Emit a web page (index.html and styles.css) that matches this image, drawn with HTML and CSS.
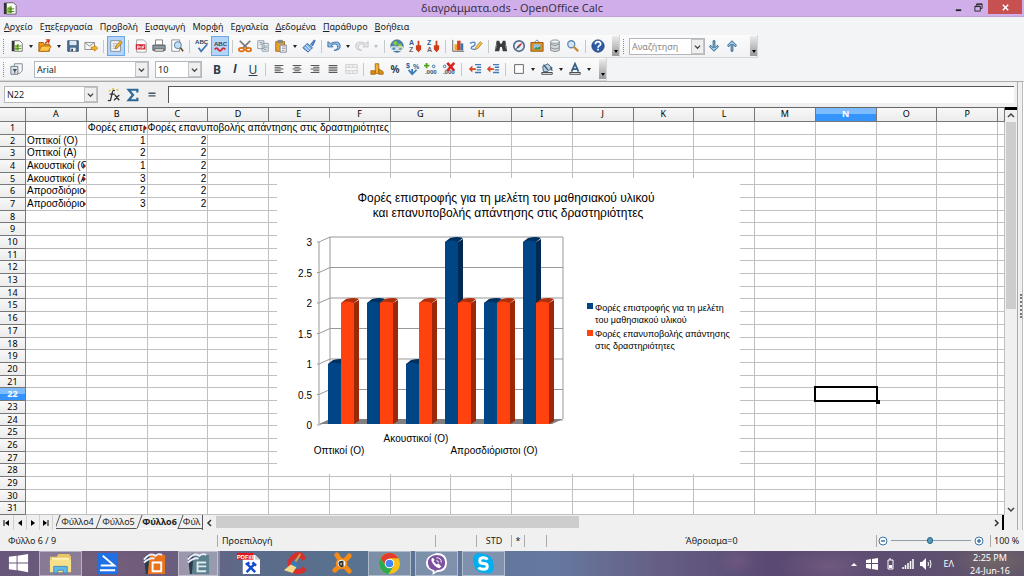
FILE: index.html
```html
<!DOCTYPE html>
<html lang="el">
<head>
    <meta charset="UTF-8">
    <meta name="viewport" content="width=device-width, initial-scale=1.0">
    <title>διαγράμματα.ods - OpenOffice Calc</title>
    <link rel="stylesheet" href="styles.css">
</head>
<body>

    <header class="titlebar">
        <svg class="icon app-icon" viewBox="0 0 16 16"><path d="M1 2h3v13H1z" fill="#333"/><path d="M4 2h8l3 3v10H4z" fill="#fff" stroke="#555"/><path d="M4 8l6-3v9H5z" fill="#8dc63f"/><path d="M6 9h7M6 12h7M9 7v7" stroke="#3f7a1c"/></svg>
        <h1>διαγράμματα.ods - OpenOffice Calc</h1>
        <div class="window-buttons">
            <button aria-label="Ελαχιστοποίηση"><svg viewBox="0 0 10 10"><path d="M2 8h6" stroke="#222" stroke-width="2"/></svg></button>
            <button aria-label="Επαναφορά"><svg viewBox="0 0 10 10"><path d="M3 3V1h6v5H7M1 3.500h6V9H1z" fill="none" stroke="#222"/><path d="M1 4h6M3 1.500h6" stroke="#222"/></svg></button>
            <button class="close" aria-label="Κλείσιμο"><svg viewBox="0 0 10 10"><path d="M2 2l6 6M8 2L2 8" stroke="#fff" stroke-width="1.600"/></svg></button>
        </div>
    </header>

    <nav class="menubar">
        <button><u>Α</u>ρχείο</button>
        <button>Ε<u>π</u>εξεργασία</button>
        <button>Πρ<u>ο</u>βολή</button>
        <button><u>Ε</u>ισαγωγή</button>
        <button>Μορ<u>φ</u>ή</button>
        <button>Ε<u>ρ</u>γαλεία</button>
        <button><u>Δ</u>εδομένα</button>
        <button><u>Π</u>αράθυρο</button>
        <button><u>Β</u>οήθεια</button>
    </nav>

    <div class="toolbar-row">
        <div class="toolbar">
            <span class="grip"></span>
            <button class="tool" aria-label="Νέο"><svg class="icon" viewBox="0 0 16 16"><path d="M2 2h3v12H2z" fill="#333"/><path d="M5 2h6l3 3v9H5z" fill="#fff" stroke="#666"/><path d="M5 8l5-3v8H6z" fill="#a5cf4c"/><path d="M6 8h7M6 11h7M9 6v7" stroke="#45812c"/></svg></button>
            <button class="drop" aria-label="Περισσότερα"></button>
            <button class="tool" aria-label="Άνοιγμα"><svg class="icon" viewBox="0 0 16 16"><path d="M1 4h5l1 2h6v8H1z" fill="#e99a1c" stroke="#a55c06"/><path d="M1 14l3-6h11l-3 6z" fill="#ffc74a" stroke="#b06a0a"/><path d="M8 5l4-3M9 1l4 0-1 4" stroke="#d33b17" stroke-width="1.500" fill="none"/></svg></button>
            <button class="drop" aria-label="Περισσότερα"></button>
            <button class="tool" aria-label="Αποθήκευση"><svg class="icon" viewBox="0 0 16 16"><path d="M2 2h12v12H2z" fill="#4d7192" stroke="#2d4a66"/><path d="M4 2h8v5H4z" fill="#dfe9f2"/><path d="M5 10h6v4H5z" fill="#f5f5f5"/><path d="M6 11h2v3H6z" fill="#345"/></svg></button>
            <button class="tool" aria-label="Αποστολή"><svg class="icon" viewBox="0 0 16 16"><path d="M1 4h11v8H1z" fill="#f6f6f6" stroke="#888"/><path d="M1 4l5 4 6-4" fill="none" stroke="#888"/><path d="M8 9h4V7l4 3.500-4 3.500v-2H8z" fill="#f7b32d" stroke="#b97508" stroke-width=".7"/></svg></button>
            <span class="sep"></span>
            <button class="tool pressed" aria-label="Επεξεργασία αρχείου" aria-pressed="true"><svg class="icon" viewBox="0 0 16 16"><path d="M2 2h11v12H2z" fill="#fff" stroke="#79838d"/><path d="M4 5h6M4 7h6M4 9h4M4 11h6" stroke="#aab"/><path d="M7 11l1-3 5-6 2 2-5 6z" fill="#f5b52b" stroke="#865c0c" stroke-width=".7"/></svg></button>
            <span class="sep"></span>
            <button class="tool" aria-label="PDF"><svg class="icon" viewBox="0 0 16 16"><path d="M3 1h8l3 3v11H3z" fill="#fff" stroke="#999"/><path d="M2 6h11v6H2z" fill="#d21f2c"/><path d="M4 11V8h2v2H4M8 8v3M10 11V8h2M10 9.500h1.500" stroke="#fff" fill="none"/></svg></button>
            <button class="tool" aria-label="Εκτύπωση"><svg class="icon" viewBox="0 0 16 16"><path d="M4 1h8v6H4z" fill="#fff" stroke="#777"/><path d="M1 7h14v6H1z" fill="#8d97a0" stroke="#4c5358"/><path d="M3 11h10v3H3z" fill="#dedede" stroke="#666"/></svg></button>
            <button class="tool" aria-label="Προεπισκόπηση"><svg class="icon" viewBox="0 0 16 16"><path d="M2 1h9v13H2z" fill="#fff" stroke="#888"/><circle cx="9" cy="7" r="4" fill="#bfe0f7" stroke="#4a7398"/><path d="M12 10l3 4" stroke="#6b4e2a" stroke-width="2"/></svg></button>
            <span class="sep"></span>
            <button class="tool" aria-label="Ορθογραφία"><svg class="icon" viewBox="0 0 16 16"><text class="abc" x="0" y="6">ABC</text><path d="M4 10l3 4 7-8" fill="none" stroke="#3b78b5" stroke-width="2"/></svg></button>
            <button class="tool pressed" aria-label="Αυτόματος έλεγχος" aria-pressed="true"><svg class="icon" viewBox="0 0 16 16"><text class="abc" x="1" y="8">ABC</text><path d="M2 12q2-3 4 0t4 0 4 0" fill="none" stroke="#d8232a" stroke-width="2"/></svg></button>
            <span class="sep"></span>
            <button class="tool" aria-label="Αποκοπή"><svg class="icon" viewBox="0 0 16 16"><path d="M2 2l9 9M14 2l-9 9" stroke="#777" stroke-width="2"/><ellipse cx="4" cy="12" rx="3" ry="2" fill="none" stroke="#e0700f" stroke-width="2"/><ellipse cx="12" cy="12" rx="3" ry="2" fill="none" stroke="#e0700f" stroke-width="2"/></svg></button>
            <button class="tool" aria-label="Αντιγραφή"><svg class="icon" viewBox="0 0 16 16"><path d="M2 2h7v9H2zM7 5h7v9H7z" fill="#eef2f6" stroke="#8896a2"/><path d="M4 4h3M4 6h3M9 8h4M9 10h4M9 12h3" stroke="#8896a2"/></svg></button>
            <button class="tool" aria-label="Επικόλληση"><svg class="icon" viewBox="0 0 16 16"><path d="M2 3h10v11H2z" fill="#e8a52b" stroke="#9a6610"/><path d="M4 1h6v4H4z" fill="#888"/><path d="M7 7h7v8H7z" fill="#fff" stroke="#778"/><path d="M9 9h4M9 11h4M9 13h3" stroke="#8896a2"/></svg></button>
            <button class="drop" aria-label="Περισσότερα"></button>
            <button class="tool" aria-label="Πινέλο μορφοποίησης"><svg class="icon" viewBox="0 0 16 16"><path d="M10 6l4-5 1 1-3 6z" fill="#5a8fd0" stroke="#2b5ea3"/><path d="M6 5l6 5-5 5-6-5z" fill="#72a9e6" stroke="#2b5ea3"/><path d="M3 9l5 5M5 7l5 5" stroke="#fff"/></svg></button>
            <span class="sep"></span>
            <button class="tool" aria-label="Αναίρεση"><svg class="icon" viewBox="0 0 16 16"><path d="M1 3v6h6L5 7q6-3 7 1t-4 5q8 0 7-6T4 5z" fill="#8fbce5" stroke="#3a6ea5"/></svg></button>
            <button class="drop" aria-label="Περισσότερα"></button>
            <button class="tool" aria-label="Επανάληψη" disabled><svg class="icon" viewBox="0 0 16 16"><path d="M15 3v6H9l2-2Q5 4 4 8t4 5q-8 0-7-6t11-2z" fill="#e6e6e6" stroke="#c2c2c2"/></svg></button>
            <button class="drop" aria-label="Περισσότερα" disabled></button>
            <span class="sep"></span>
            <button class="tool" aria-label="Υπερσύνδεσμος"><svg class="icon" viewBox="0 0 16 16"><circle cx="8" cy="8" r="7" fill="#4587ba" stroke="#315d7d"/><path d="M3 4l4-2 2 3-3 3zM9 6l4-1 1 5-4 2z" fill="#8cc63c"/><path d="M2 9h5v4H2zM9 9h5v4H9zM6 11h4" fill="none" stroke="#e8e8e8" stroke-width="1.500"/></svg></button>
            <button class="tool" aria-label="Αύξουσα ταξινόμηση"><svg class="icon" viewBox="0 0 16 16"><text class="sort-letter" x="1" y="7">A</text><text class="sort-letter grey" x="1" y="15">Z</text><path d="M11 2h2v5h2v5l-3 3-3-3V7h2z" fill="#cf3d1c"/></svg></button>
            <button class="tool" aria-label="Φθίνουσα ταξινόμηση"><svg class="icon" viewBox="0 0 16 16"><text class="sort-letter" x="1" y="7">Z</text><text class="sort-letter grey" x="1" y="15">A</text><path d="M11 2h2v5h2v5l-3 3-3-3V7h2z" fill="#cf3d1c"/></svg></button>
            <span class="sep"></span>
            <button class="tool" aria-label="Γράφημα"><svg class="icon" viewBox="0 0 16 16"><path d="M2 1v13h13" fill="none" stroke="#555"/><path d="M4 6h3v7H4z" fill="#f3a22b"/><path d="M7 2h4v11H7z" fill="#d2421c"/><path d="M11 5h3v8h-3z" fill="#3c75b3"/></svg></button>
            <button class="tool" aria-label="Σχεδίαση"><svg class="icon" viewBox="0 0 16 16"><path d="M1 5q6-3 6 0t-4 4q-2 3 4 3" fill="none" stroke="#4f87c5" stroke-width="1.500"/><path d="M7 12l1-3 5-6 2 2-5 6z" fill="#f8c04e" stroke="#94630c" stroke-width=".7"/></svg></button>
            <span class="sep"></span>
            <button class="tool" aria-label="Εύρεση"><svg class="icon" viewBox="0 0 16 16"><path d="M3 2h3l1 3h2l1-3h3l2 12h-5l-1-5H7l-1 5H1z" fill="#3a3d40"/><path d="M3 6l-1 5M13 6l1 5" stroke="#90959a"/></svg></button>
            <button class="tool" aria-label="Πλοηγός"><svg class="icon" viewBox="0 0 16 16"><circle cx="8" cy="8" r="6" fill="#e9f2fa" stroke="#5c7090" stroke-width="2"/><path d="M12 4l-3 5-2-2z" fill="#d22"/><path d="M4 12l3-5 2 2z" fill="#456"/></svg></button>
            <button class="tool" aria-label="Συλλογή"><svg class="icon" viewBox="0 0 16 16"><path d="M5 4l3-3 3 3" fill="none" stroke="#777"/><path d="M1 4h14v10H1z" fill="#e28a1b" stroke="#975609"/><path d="M4 6h8v6H4z" fill="#8ec3e8"/><path d="M4 12l3-3 2 1 3-2v4z" fill="#4c9340"/></svg></button>
            <button class="tool" aria-label="Προελεύσεις δεδομένων"><svg class="icon" viewBox="0 0 16 16"><path d="M3 3v10q5 3 10 0V3z" fill="#d5d9dc" stroke="#848b91"/><ellipse cx="8" cy="3" rx="5" ry="2" fill="#f4f4f4" stroke="#848b91"/><path d="M3 6q5 3 10 0M3 10q5 3 10 0" fill="none" stroke="#848b91"/></svg></button>
            <button class="tool" aria-label="Εστίαση"><svg class="icon" viewBox="0 0 16 16"><circle cx="6" cy="6" r="4" fill="#cfe7f8" stroke="#6489a8" stroke-width="1.500"/><path d="M9 9l5 5" stroke="#c98b2d" stroke-width="2.500"/></svg></button>
            <span class="sep"></span>
            <button class="tool" aria-label="Βοήθεια"><svg class="icon" viewBox="0 0 16 16"><circle cx="8" cy="8" r="7" fill="#2c5da8" stroke="#1b3a76"/><path d="M5 6q0-3 3-3t3 3q0 1-2 2-1 1-1 2M8 11v2" fill="none" stroke="#fff" stroke-width="2"/></svg></button>
            <button class="overflow" aria-label="Περισσότερα κουμπιά"></button>
        </div>
        <div class="toolbar">
            <span class="grip"></span>
            <div class="combo search-box">
                <input type="text" placeholder="Αναζήτηση" aria-label="Αναζήτηση">
                <button class="combo-arrow" aria-label="Ιστορικό"><svg viewBox="0 0 8 8"><path d="M1 3l3 3 3-3" fill="none" stroke="#444" stroke-width="1.500"/></svg></button>
            </div>
            <button class="tool" aria-label="Επόμενο"><svg class="icon" viewBox="0 0 16 16"><path d="M7 2h2v8l3-3 1 2-5 5-5-5 1-2 3 3z" fill="#9cc8ea" stroke="#25597f"/></svg></button>
            <button class="tool" aria-label="Προηγούμενο"><svg class="icon" viewBox="0 0 16 16"><path d="M7 14h2V6l3 3 1-2-5-5-5 5 1 2 3-3z" fill="#9cc8ea" stroke="#25597f"/></svg></button>
            <button class="overflow last" aria-label="Περισσότερα κουμπιά"></button>
        </div>
    </div>

    <div class="toolbar-row formatting">
        <div class="toolbar">
            <span class="grip"></span>
            <button class="tool" aria-label="Στυλ"><svg class="icon" viewBox="0 0 16 16"><path d="M5 2h9v8l-3 3H5z" fill="#f5f7f9" stroke="#76828c"/><path d="M1 5h8v9H1z" fill="#dce3e9" stroke="#65717b"/><path d="M3 8h5l-2 3v2H5v-2z" fill="#46525c"/></svg></button>
            <div class="combo font-name">
                <select aria-label="Γραμματοσειρά"><option>Arial</option></select>
                <span class="combo-arrow"><svg viewBox="0 0 8 8"><path d="M1 3l3 3 3-3" fill="none" stroke="#444" stroke-width="1.500"/></svg></span>
            </div>
            <div class="combo font-size">
                <select aria-label="Μέγεθος"><option>10</option></select>
                <span class="combo-arrow"><svg viewBox="0 0 8 8"><path d="M1 3l3 3 3-3" fill="none" stroke="#444" stroke-width="1.500"/></svg></span>
            </div>
            <button class="tool letter"><b>B</b></button>
            <button class="tool letter"><i>I</i></button>
            <button class="tool letter"><u>U</u></button>
            <span class="sep"></span>
            <button class="tool" aria-label="Στοίχιση αριστερά"><svg class="icon" viewBox="0 0 16 16"><path d="M3 4h10M3 6h7M3 8h10M3 10h7M3 12h10" stroke="#444"/></svg></button>
            <button class="tool" aria-label="Κεντράρισμα"><svg class="icon" viewBox="0 0 16 16"><path d="M3 4h10M5 6h6M3 8h10M5 10h6M3 12h10" stroke="#444"/></svg></button>
            <button class="tool" aria-label="Στοίχιση δεξιά"><svg class="icon" viewBox="0 0 16 16"><path d="M3 4h10M6 6h7M3 8h10M6 10h7M3 12h10" stroke="#444"/></svg></button>
            <button class="tool" aria-label="Πλήρης στοίχιση"><svg class="icon" viewBox="0 0 16 16"><path d="M3 4h10M3 6h10M3 8h10M3 10h10M3 12h10" stroke="#444"/></svg></button>
            <button class="tool" aria-label="Συγχώνευση κελιών" disabled><svg class="icon" viewBox="0 0 16 16"><path d="M2 3h13v10H2zM2 6h13M2 10h13M6 3v3M10 3v3M6 10v3M10 10v3" fill="none" stroke="#ccc"/></svg></button>
            <span class="sep"></span>
            <button class="tool" aria-label="Νόμισμα"><svg class="icon" viewBox="0 0 16 16"><path d="M6 2h4v11H6z" fill="#f3b335" stroke="#a8690b"/><path d="M1 10h5v4H1zM10 8l5 3v3h-5z" fill="#dc8d18" stroke="#a8690b"/></svg></button>
            <button class="tool letter percent">%</button>
            <button class="tool" aria-label="Τυπική μορφή"><svg class="icon" viewBox="0 0 16 16"><text class="sort-letter" x="0" y="7">$</text><text class="sort-letter" x="8" y="8">%</text><path d="M3 9l4 5 5-5M7 8v5" fill="none" stroke="#387bb7" stroke-width="2"/></svg></button>
            <button class="tool" aria-label="Προσθήκη δεκαδικού"><svg class="icon" viewBox="0 0 16 16"><path d="M3 1v6M0 4h6" stroke="#53a21e" stroke-width="2"/><circle cx="11" cy="5" r="1.500" fill="none" stroke="#2d69a4"/><text class="decimals" x="1" y="14">.000</text></svg></button>
            <button class="tool" aria-label="Διαγραφή δεκαδικού"><svg class="icon" viewBox="0 0 16 16"><circle cx="3" cy="5" r="1.500" fill="none" stroke="#2d69a4"/><text class="decimals" x="1" y="14">.000</text><path d="M6 1l8 9M14 1l-8 9" stroke="#d52420" stroke-width="3"/></svg></button>
            <span class="sep"></span>
            <button class="tool" aria-label="Μείωση εσοχής"><svg class="icon" viewBox="0 0 16 16"><path d="M8 3h7M10 6h5M10 9h5M8 12h7" stroke="#3e7ab8" stroke-width="1.500"/><path d="M1 8l4-4v3h4v2H5v3z" fill="#d9441e"/></svg></button>
            <button class="tool" aria-label="Αύξηση εσοχής"><svg class="icon" viewBox="0 0 16 16"><path d="M8 3h7M10 6h5M10 9h5M8 12h7" stroke="#3e7ab8" stroke-width="1.500"/><path d="M1 8l4-4v3h4v2H5v3z" fill="#d9441e"/></svg></button>
            <span class="sep"></span>
            <button class="tool" aria-label="Περιγράμματα"><svg class="icon" viewBox="0 0 16 16"><path d="M3 3h10v10H3z" fill="#fff" stroke="#555"/></svg></button>
            <button class="drop" aria-label="Περισσότερα"></button>
            <button class="tool" aria-label="Χρώμα φόντου"><svg class="icon" viewBox="0 0 16 16"><path d="M3 5l6-3 5 5-6 4H4z" fill="#b9cfe1" stroke="#395873"/><path d="M4 3l5 6M12 6l2 4" stroke="#395873" stroke-width="1.500"/><path d="M2 12h12v2H2z" fill="#fff" stroke="#333"/></svg></button>
            <button class="drop" aria-label="Περισσότερα"></button>
            <button class="tool" aria-label="Χρώμα γραμματοσειράς"><svg class="icon" viewBox="0 0 16 16"><path d="M4 11l4-9 4 9M5 8h6" fill="none" stroke="#355f88" stroke-width="2"/><path d="M2 12h12v2H2z" fill="#fff" stroke="#333"/></svg></button>
            <button class="drop" aria-label="Περισσότερα"></button>
            <button class="overflow" aria-label="Περισσότερα κουμπιά"></button>
        </div>
    </div>

    <main class="document">
        <div class="workspace">
            <div class="formula-bar">
                <div class="combo name-box">
                    <input type="text" value="N22" aria-label="Πλαίσιο ονόματος">
                    <button class="combo-arrow" aria-label="Περιοχές"><svg viewBox="0 0 8 8"><path d="M1 3l3 3 3-3" fill="none" stroke="#444" stroke-width="1.500"/></svg></button>
                </div>
                <button class="tool function" aria-label="Οδηγός συναρτήσεων"><svg class="icon" viewBox="0 0 16 16"><path d="M2 3h2M6 1h2M11 2h2" stroke="#efc22b" stroke-width="2"/><path d="M9 3q-3-1-3 3L4 14q-1 1-3 0M3 7h6M9 8l5 6M14 8l-6 6" fill="none" stroke="#333" stroke-width="1.500"/></svg></button>
                <button class="tool" aria-label="Άθροισμα"><svg class="icon" viewBox="0 0 16 16"><path d="M13 5V2H3l5 6-5 6h10v-3" fill="none" stroke="#2c6898" stroke-width="2.500"/></svg></button>
                <button class="tool" aria-label="Συνάρτηση"><svg class="icon" viewBox="0 0 16 16"><path d="M4 6h8M4 9h8" stroke="#3f5668" stroke-width="1.500"/></svg></button>
                <input class="formula-input" type="text" aria-label="Γραμμή τύπων">
            </div>

            <div class="sheet-area">
                <div class="sheet">
                    <table id="grid"></table>
                    <svg class="chart" viewBox="0 0 463 296" role="img" aria-label="Γράφημα">
                        <text class="chart-title" x="229" y="24">Φορές επιστροφής για τη μελέτη του μαθησιακού υλικού</text>
                        <text class="chart-title" x="231" y="39">και επανυποβολής απάντησης στις δραστηριότητες</text>
                        <g id="axis"></g>
                        <path d="M42 246h233l11-5H53z" fill="#808080"/>
                        <g id="bars"></g>
                        <text class="category" x="62" y="276">Οπτικοί (Ο)</text>
                        <text class="category" x="139" y="264">Ακουστικοί (Ο)</text>
                        <text class="category" x="217" y="276">Απροσδιόριστοι (Ο)</text>
                        <rect x="310" y="125" width="6" height="6" fill="#004586"/>
                        <text class="legend" x="318" y="133">Φορές επιστροφής για τη μελέτη</text>
                        <text class="legend" x="318" y="145">του μαθησιακού υλικού</text>
                        <rect x="310" y="152" width="6" height="6" fill="#ff420e"/>
                        <text class="legend" x="318" y="159">Φορές επανυποβολής απάντησης</text>
                        <text class="legend" x="318" y="171">στις δραστηριότητες</text>
                    </svg>
                </div>
                <div class="vscroll">
                    <span class="split-handle"></span>
                    <button aria-label="Πάνω"><svg viewBox="0 0 8 8"><path d="M1 5l3-3 3 3" fill="none" stroke="#444" stroke-width="1.500"/></svg></button>
                    <div class="vtrack"><div class="vthumb"></div></div>
                    <button aria-label="Κάτω"><svg viewBox="0 0 8 8"><path d="M1 3l3 3 3-3" fill="none" stroke="#444" stroke-width="1.500"/></svg></button>
                </div>
            </div>

            <div class="tabs-bar">
                <div class="tab-nav">
                    <button aria-label="Πρώτο φύλλο"><svg viewBox="0 0 8 8"><path d="M1 1v6" stroke="#000"/><path d="M6 1v6L2 4z"/></svg></button>
                    <button aria-label="Προηγούμενο φύλλο"><svg viewBox="0 0 8 8"><path d="M6 1v6L2 4z"/></svg></button>
                    <button aria-label="Επόμενο φύλλο"><svg viewBox="0 0 8 8"><path d="M2 1v6l4-3z"/></svg></button>
                    <button aria-label="Τελευταίο φύλλο"><svg viewBox="0 0 8 8"><path d="M1 1v6l4-3z"/><path d="M6 1v6" stroke="#000"/></svg></button>
                </div>
                <div class="tabs">
                    <button>Φύλλο4</button>
                    <button>Φύλλο5</button>
                    <button class="active">Φύλλο6</button>
                    <button class="cut">Φύλ</button>
                </div>
                <div class="hscroll">
                    <button aria-label="Αριστερά"><svg viewBox="0 0 8 8"><path d="M5 1L2 4l3 3" fill="none" stroke="#333" stroke-width="1.500"/></svg></button>
                    <div class="htrack"><div class="hthumb"></div></div>
                    <button aria-label="Δεξιά"><svg viewBox="0 0 8 8"><path d="M3 1l3 3-3 3" fill="none" stroke="#333" stroke-width="1.500"/></svg></button>
                </div>
            </div>
        </div>
        <div class="side-strip"><span></span></div>
    </main>

    <footer class="statusbar">
        <span class="st-sheet">Φύλλο 6 / 9</span>
        <span class="st-style">Προεπιλογή</span>
        <span class="st-insert"></span>
        <span class="st-mode">STD</span>
        <span class="st-mod">*</span>
        <span class="st-sign"></span>
        <span class="st-sum">Άθροισμα=0</span>
        <span class="st-zoom">
            <button aria-label="Σμίκρυνση"><svg viewBox="0 0 10 10"><circle cx="5" cy="5" r="4" fill="#fff" stroke="#3a75a8"/><path d="M3 5h4" stroke="#3a75a8" stroke-width="1.500"/></svg></button>
            <input type="range" min="0" max="100" value="49" aria-label="Ζουμ">
            <button aria-label="Μεγέθυνση"><svg viewBox="0 0 10 10"><circle cx="5" cy="5" r="4" fill="#fff" stroke="#3a75a8"/><path d="M3 5h4M5 3v4" stroke="#3a75a8" stroke-width="1.500"/></svg></button>
        </span>
        <span class="st-percent">100 %</span>
    </footer>

    <div class="taskbar">
        <button class="start" aria-label="Έναρξη"><svg viewBox="0 0 24 24"><path d="M2 5l8-1v7H2zM11 4l11-2v9H11zM2 12h8v7l-8-1zM11 12h11v9l-11-2z" fill="#fff"/></svg></button>
        <button class="open" aria-label="Εξερεύνηση"><svg viewBox="0 0 24 24"><path d="M1 5h7l2-3h11l2 3v16H1z" fill="#e7c767"/><path d="M3 6h18v3H3z" fill="#fff4b8"/><path d="M1 8h22v13H1z" fill="#f7e08c"/><path d="M5 22v-7h14v7h-4v-3H9v3z" fill="#62b8e6" stroke="#3f8dbb"/></svg></button>
        <button aria-label="Εφαρμογή"><svg viewBox="0 0 24 24"><path d="M1 1h22v22H1z" fill="#1f6fe5"/><path d="M7 4l12 10H5M4 19h16" fill="none" stroke="#fff" stroke-width="2"/></svg></button>
        <button aria-label="OpenOffice"><svg viewBox="0 0 24 24"><path d="M1 5L7 1v22H3z" fill="#293d49"/><path d="M7 3h16v20H5z" fill="#e8731d"/><path d="M10 11h9v9h-9z" fill="none" stroke="#fff" stroke-width="2"/><path d="M1 8q6-8 12-4 3-3 7-1M1 11q7-6 11-4" fill="none" stroke="#eef" stroke-width="2"/></svg></button>
        <button class="open current" aria-label="OpenOffice Calc"><svg viewBox="0 0 24 24"><path d="M1 5L7 1v22H3z" fill="#293d49"/><path d="M7 3h16v20H5z" fill="#5c7f8d"/><path d="M11 11h9M11 15h9M11 20h9M11 10v11" stroke="#dce9ee" stroke-width="2"/><path d="M1 8q6-8 12-4 3-3 7-1M1 11q7-6 11-4" fill="none" stroke="#eef" stroke-width="2"/></svg></button>
        <button class="pdf-app" aria-label="PDFill"><svg viewBox="0 0 24 24"><path d="M6 3h13l5 5v15H6z" fill="#fff"/><path d="M19 3v5h5" fill="#ccc"/><path d="M0 1h17v7H0z" fill="#e3141f"/><text class="pdf-label" x="0" y="7">PDFill</text><path d="M10 21l8-8M11 13l8 8M9 13l4-2M16 11l4 3" stroke="#144bd3" stroke-width="2.500"/></svg></button>
        <button aria-label="CCleaner"><svg viewBox="0 0 24 24"><path d="M21 8Q17-1 10 5T9 19q7 4 13-2" fill="none" stroke="#d6302c" stroke-width="5"/><path d="M17 2l-5 8" stroke="#d7a04d" stroke-width="2"/><path d="M9 9l7 4-3 3-6-3z" fill="#367bc0"/><path d="M7 13l6 3-4 6-9-3z" fill="#f4d88c"/></svg></button>
        <button aria-label="Avast"><svg viewBox="0 0 24 24"><path d="M12 12L6 3M12 12l7-8M12 12l-8 7M12 12l7 8" stroke="#f58b15" stroke-width="5" stroke-linecap="round"/><circle cx="11" cy="12" r="6" fill="#f58b15"/><circle cx="11" cy="12" r="4" fill="#fff"/><path d="M13 14q-3 2-4-1t3-3v4" fill="none" stroke="#333" stroke-width="2"/></svg></button>
        <button class="open" aria-label="Chrome"><svg viewBox="0 0 24 24"><circle cx="12" cy="12" r="11" fill="#fbc116"/><path d="M2.500 6.500A11 11 0 0 1 21.500 6.500H12L8 14z" fill="#e33b2e"/><path d="M2.500 6.500A11 11 0 0 0 11 23l5-8-8-1z" fill="#2da94f"/><circle cx="12" cy="12" r="5" fill="#fff"/><circle cx="12" cy="12" r="4" fill="#4285f4"/></svg></button>
        <button class="open" aria-label="Viber"><svg viewBox="0 0 24 24"><path d="M12 1q11 0 11 10t-11 10l-4 3v-4Q1 18 1 11T12 1z" fill="#fff"/><path d="M12 3q9 0 9 8t-9 8l-2 2v-2q-7-1-7-8t9-8z" fill="#7d519f"/><path d="M8 6q-2 1-1 4 3 6 8 7l2-2-3-3-2 1-3-3 1-2z" fill="#fff"/><path d="M12 6q5 0 5 5M12 9q2 0 2 2" fill="none" stroke="#fff"/></svg></button>
        <button class="open" aria-label="Skype"><svg viewBox="0 0 24 24"><path d="M7 1q3 0 5 1 10 1 10 10 1 3 1 5-2 7-9 5Q3 22 2 13-1 2 7 1z" fill="#00aff0"/><path d="M16 8q-1-2-4-2-4 0-4 3t4 3q4 0 4 3t-4 3q-4 0-5-2" fill="none" stroke="#fff" stroke-width="3"/></svg></button>
        <div class="tray">
            <svg class="tray-up" viewBox="0 0 8 8"><path d="M1 6l3-3 3 3z" fill="#fff"/></svg>
            <svg viewBox="0 0 12 12"><path d="M0 2l5-1v4H0zM6 1l6-1v5H6zM0 6h5v5l-5-1zM6 6h6v6l-6-1z" fill="#fff"/></svg>
            <svg viewBox="0 0 12 12"><path d="M5 1h2M4 2h5v9H4z" fill="none" stroke="#fff"/><path d="M5 7h3v3H5z" fill="#fff"/></svg>
            <svg viewBox="0 0 12 12"><path d="M1 11V9M3.500 11V7M6 11V5M8.500 11V3M11 11V1" stroke="#fff" stroke-width="1.500"/></svg>
            <svg viewBox="0 0 12 12"><path d="M0 4h2l4-4v12L2 8H0z" fill="#fff"/><path d="M8 4q1 2 0 4M10 2q2 4 0 8" fill="none" stroke="#fff"/></svg>
            <span class="lang">ΕΛ</span>
            <time class="clock">2:25 PM<br>24-Jun-16</time>
        </div>
    </div>

    <script src="script.js"></script>
</body>
</html>
```
FILE: styles.css
```css
* {
    box-sizing: border-box;
}

body {
    margin: 0;
    height: 100vh;
    display: flex;
    flex-direction: column;
    overflow: hidden;
    font-family: "Noto Sans", "Open Sans", sans-serif;
    font-size: 9px;
    color: #222;
    background: #f3f4f6;
}

button, input, select {
    font: inherit;
    color: inherit;
    margin: 0;
    padding: 0;
    border: 0;
    background: none;
    border-radius: 0;
    min-width: 0;
}

button {
    display: flex;
    align-items: center;
    justify-content: center;
}

svg {
    display: block;
}

/* title bar */
.titlebar {
    display: grid;
    grid-template-columns: 120px 1fr 120px;
    align-items: center;
    height: 17px;
    flex: none;
    background: #d0aeea;
    border-bottom: 1px solid #bfa0d8;
}

.titlebar h1 {
    margin: 0;
    text-align: center;
    font-size: 11px;
    line-height: 16px;
    font-weight: normal;
    color: #3c3148;
}

.app-icon {
    margin-left: 3px;
}

.window-buttons {
    display: flex;
    justify-content: flex-end;
    height: 14px;
    align-self: start;
    margin-right: 2px;
}

.window-buttons button {
    width: 20px;
}

.window-buttons .close {
    width: 34px;
    background: #c75050;
}

.window-buttons svg {
    width: 9px;
}

/* menus */
.menubar {
    display: flex;
    gap: 7px;
    align-items: center;
    height: 18px;
    padding-left: 4px;
    flex: none;
}

/* toolbars */
.toolbar-row {
    display: flex;
    flex: none;
    height: 23px;
}

.toolbar {
    display: flex;
    align-items: center;
    border-right: 1px solid #d4d6d8;
    border-bottom: 1px solid #d4d6d8;
    background: linear-gradient(#fbfbfc, #f1f2f4);
}

.grip {
    width: 2px;
    height: 15px;
    margin: 0 3px;
    border-left: 1px dotted #888;
}

.tool {
    width: 18px;
    height: 20px;
    flex: none;
}

.pressed {
    background: #b5d5f8;
    border: 1px solid #6ba6e3;
}

.icon {
    width: 14px;
    height: 14px;
    flex: none;
}

.drop {
    width: 10px;
    height: 20px;
}

.drop::after {
    content: "";
    border: 2px solid transparent;
    border-top: 3px solid #222;
    border-bottom: 0;
}

.drop:disabled::after {
    border-top-color: #bbb;
}

.sep {
    width: 1px;
    height: 13px;
    margin: 0 3px;
    background: #c6c8ca;
}

.formatting .sep {
    margin-right: 4px;
}

.overflow {
    width: 7px;
    height: 20px;
    margin-left: 5px;
    align-items: flex-end;
    padding-bottom: 3px;
    background: linear-gradient(#ececec, #999);
}

.overflow.last {
    margin-left: 9px;
}

.overflow::after {
    content: "";
    border: 2px solid transparent;
    border-top: 3px solid #000;
    border-bottom: 0;
}

.abc {
    font: bold 7px "Liberation Sans", sans-serif;
    fill: #33424f;
}

.sort-letter {
    font: bold 8px "Liberation Sans", sans-serif;
    fill: #245f94;
}

.grey {
    fill: #666;
}

.decimals {
    font: bold 7px "Liberation Sans", sans-serif;
    fill: #29506f;
}

.letter {
    font-size: 12px;
    color: #2b3d4c;
}

.letter i {
    font-family: "Liberation Sans", sans-serif;
    font-weight: bold;
}

.percent {
    font-size: 10px;
    font-weight: bold;
}

.combo {
    display: flex;
    position: relative;
    height: 17px;
    border: 1px solid #b5b7ba;
    background: #fff;
}

.combo input,
.combo select {
    flex: 1;
    padding-left: 2px;
    appearance: none;
}

.combo-arrow {
    width: 13px;
    display: flex;
    align-items: center;
    justify-content: center;
    border: 1px solid #c2c4c6;
    background: #efefef;
    flex: none;
}

.combo-arrow svg {
    width: 7px;
}

.font-name {
    width: 115px;
    margin-left: 8px;
}

.font-size {
    width: 47px;
    margin: 0 6px;
}

.search-box {
    width: 76px;
    margin-left: 1px;
}

.search-box input::placeholder {
    color: #888;
    opacity: 1;
}

/* document window */
.document {
    flex: 1;
    min-height: 0;
    display: flex;
    background: #f0f0f0;
}

.workspace {
    flex: 1;
    min-width: 0;
    display: flex;
    flex-direction: column;
    border-top: 1px solid #aaa;
    border-right: 1px solid #aaa;
}

.side-strip {
    width: 6px;
    display: flex;
    align-items: center;
    border-top: 1px solid #aaa;
    border-right: 1px solid #fff;
    box-shadow: inset -1px 0 #bbb;
}

.side-strip span {
    width: 2px;
    height: 24px;
    margin-left: 2px;
    border-left: 2px dotted #777;
}

.formula-bar {
    display: flex;
    align-items: center;
    height: 25px;
    padding: 0 3px 0 4px;
    flex: none;
}

.name-box {
    width: 94px;
}

.function {
    margin-left: 6px;
}

.formula-bar .tool {
    width: 19px;
}

.formula-input {
    flex: 1;
    height: 17px;
    margin-left: 7px;
    background: #fff;
    border-top: 1px solid #555;
    border-left: 1px solid #555;
}

.sheet-area {
    flex: 1;
    min-height: 0;
    display: flex;
}

.sheet {
    flex: 1;
    min-width: 0;
    position: relative;
    background: #fff;
    overflow: hidden;
    border-top: 1px solid #666;
}

#grid {
    display: grid;
    grid-template-columns: 26px repeat(16, 1fr) 7px;
    grid-template-rows: 14px repeat(31, 1fr);
    height: 100%;
    font: 10px/12px "Liberation Sans", sans-serif;
    color: #000;
}

#grid thead, #grid tbody, #grid tr {
    display: contents;
}

#grid th, #grid td {
    min-width: 0;
    min-height: 0;
    padding: 0 1px;
    overflow: hidden;
    white-space: nowrap;
    text-align: left;
    border-right: 1px solid #c0c0c0;
    border-bottom: 1px solid #c0c0c0;
}

#grid th {
    text-align: center;
    font-family: "Noto Sans", sans-serif;
    font-size: 9px;
    font-weight: normal;
    background: linear-gradient(#f8f8f8, #ececec);
    border-color: #777;
}

#grid .selected {
    color: #fff;
    font-weight: bold;
    background: linear-gradient(#7dbcff 50%, #3594fb 50%);
}

#grid .number {
    text-align: right;
}

#grid .spill {
    grid-column: span 4;
    padding: 0;
}

#grid .clipped {
    position: relative;
}

.clipped::after {
    content: "";
    position: absolute;
    right: 0;
    top: 3px;
    border: 3px solid transparent;
    border-left-color: #8b1a1a;
    border-right: 0;
    background: #fff;
}

#grid .cursor {
    position: relative;
    overflow: visible;
}

.cursor::before {
    content: "";
    position: absolute;
    inset: -2px;
    border: 2px solid #000;
}

.cursor::after {
    content: "";
    position: absolute;
    right: -4px;
    bottom: -4px;
    width: 4px;
    height: 4px;
    background: #000;
}

/* chart floats over the cells */
.chart {
    position: absolute;
    left: 277px;
    top: 70px;
    width: 463px;
    height: 296px;
    background: #fff;
    font-family: "Liberation Sans", sans-serif;
}

.chart-title {
    font-size: 12px;
    text-anchor: middle;
}

.category {
    font-size: 10px;
    text-anchor: middle;
}

.legend {
    font-size: 9px;
}

.axis-label {
    font-size: 10px;
    text-anchor: end;
}

.vscroll {
    width: 12px;
    display: flex;
    flex-direction: column;
    background: #f0f0f0;
}

.vscroll button {
    height: 12px;
}

.vscroll svg, .hscroll svg, .tab-nav svg {
    width: 8px;
}

.split-handle {
    height: 3px;
    background: #000;
}

.vtrack {
    flex: 1;
}

.vthumb {
    height: 49%;
    margin: 0 1px;
    background: #cdcdcd;
}

.tabs-bar {
    display: flex;
    height: 15px;
    flex: none;
}

.tab-nav {
    display: flex;
    padding-left: 1px;
}

.tab-nav button {
    width: 13px;
    border-right: 1px solid #d0d0d0;
}

.tabs {
    display: flex;
    width: 147px;
    margin-left: 3px;
    padding-left: 1px;
    overflow: hidden;
    border-right: 1px solid #555;
}

.tabs button {
    position: relative;
    width: 41px;
    flex: none;
    height: 13px;
}

.tabs button::before {
    content: "";
    position: absolute;
    left: 0;
    top: 0;
    width: 41px;
    height: 13px;
    border-left: 1px solid #555;
    border-bottom: 1px solid #555;
    transform: skewX(-20deg);
}

.tabs .active {
    font-weight: bold;
}

.tabs .active::before {
    border-bottom-color: #fff;
}

.tabs .cut {
    width: 23px;
}

.hscroll {
    flex: 1;
    display: flex;
    margin-right: 13px;
    border-right: 2px solid #000;
}

.hscroll button {
    width: 13px;
}

.htrack {
    flex: 1;
    padding: 1px 0;
}

.hthumb {
    width: 47%;
    height: 12px;
    background: #cdcdcd;
}

/* status bar */
.statusbar {
    display: flex;
    align-items: center;
    height: 21px;
    flex: none;
    background: #f0f0f0;
}

.statusbar > span {
    height: 12px;
    line-height: 12px;
    border-right: 1px solid #aaa;
}

.st-sheet {
    width: 218px;
    padding-left: 8px;
}

.st-style {
    width: 218px;
    padding-left: 4px;
}

.st-insert {
    width: 41px;
}

.st-mode {
    width: 35px;
    text-align: center;
}

.st-mod {
    width: 13px;
    text-align: center;
}

.st-sign {
    width: 22px;
}

.st-sum {
    flex: 1;
    text-align: center;
}

.statusbar .st-zoom {
    width: 114px;
    display: flex;
    align-items: center;
    justify-content: center;
    padding-right: 6px;
}

.st-zoom svg {
    width: 10px;
}

.st-zoom input {
    width: 80px;
    height: 10px;
    margin: 0 3px;
    appearance: none;
    background: linear-gradient(#8aa0ae, #8aa0ae) center / 100% 1px no-repeat;
}

.st-zoom input::-webkit-slider-thumb {
    appearance: none;
    width: 6px;
    height: 7px;
    border-radius: 3px;
    border: 1px solid #2d5f83;
    background: #4f9bb8;
}

.statusbar .st-percent {
    width: 33px;
    padding-left: 3px;
    border: 0;
}

/* taskbar */
.taskbar {
    display: flex;
    height: 25px;
    flex: none;
    color: #fff;
    background:
        radial-gradient(ellipse 20px 14px at 72% 40%, rgba(120, 90, 130, 0.6), transparent),
        radial-gradient(ellipse 50px 20px at 81% 60%, rgba(125, 98, 135, 0.6), transparent),
        radial-gradient(ellipse 40px 18px at 97% 40%, rgba(125, 112, 98, 0.6), transparent),
        radial-gradient(ellipse 60px 20px at 10% 60%, rgba(130, 100, 120, 0.5), transparent),
        linear-gradient(90deg, #67587b, #6d5b7c 15%, #5c6a89 24%, #58728f 34%, #6579a0 54%, #665f85 64%, #5a4a73 75%, #5c4d70 88%, #62576a);
}

.taskbar button {
    width: 43px;
    margin-right: 4px;
}

.taskbar button svg {
    width: 23px;
    height: 23px;
}

.taskbar .start {
    width: 36px;
    margin-right: 3px;
}

.taskbar .open {
    background: rgba(255, 255, 255, 0.2);
    border: 1px solid rgba(255, 255, 255, 0.4);
}

.taskbar .current {
    width: 40px;
    margin-left: -2px;
    background: rgba(255, 255, 255, 0.35);
    box-shadow: 2px 0 rgba(255, 255, 255, 0.25);
}

.taskbar .pdf-app {
    margin-left: 5px;
}

.pdf-label {
    font: bold 6px "Liberation Sans", sans-serif;
    fill: #fff;
}

.tray {
    display: flex;
    align-items: center;
    gap: 6px;
    margin-left: auto;
    padding-right: 14px;
}

.tray svg {
    width: 12px;
}

.tray .tray-up {
    width: 8px;
    margin-right: 2px;
}

.lang {
    margin: 0 10px 0 6px;
}

.clock {
    text-align: center;
    line-height: 13px;
}
```
FILE: script.js
```js
const columns = 'ABCDEFGHIJKLMNOP'.split('');
const rowCount = 31;
const selected = { column: 'N', row: 22 };

const cells = {
    B1: 'Φορές επιστροφής', C1: 'Φορές επανυποβολής απάντησης στις δραστηριότητες',
    A2: 'Οπτικοί (Ο)', B2: 1, C2: 2,
    A3: 'Οπτικοί (Α)', B3: 2, C3: 2,
    A4: 'Ακουστικοί (Ο)', B4: 1, C4: 2,
    A5: 'Ακουστικοί (Α)', B5: 3, C5: 2,
    A6: 'Απροσδιόριστοι (Ο)', B6: 2, C6: 2,
    A7: 'Απροσδιόριστοι (Α)', B7: 3, C7: 2
};
const clipped = ['B1', 'A4', 'A5', 'A6', 'A7'];

// Sheet
let html = '<thead><tr><th></th>';
columns.forEach(c => {
    html += `<th class="${c === selected.column ? 'selected' : ''}">${c}</th>`;
});
html += '<th></th></tr></thead><tbody>';

for (let r = 1; r <= rowCount; r++) {
    html += `<tr><th class="${r === selected.row ? 'selected' : ''}">${r}</th>`;
    columns.forEach(c => {
        const id = c + r;
        // C1 runs over the three empty cells next to it
        if (['D1', 'E1', 'F1'].includes(id)) return;
        const value = cells[id] ?? '';
        const names = [];
        if (typeof value === 'number') names.push('number');
        if (id === 'C1') names.push('spill');
        if (clipped.includes(id)) names.push('clipped');
        if (c === selected.column && r === selected.row) names.push('cursor');
        html += `<td class="${names.join(' ')}">${value}</td>`;
    });
    html += '<td></td></tr>';
}
document.getElementById('grid').innerHTML = html + '</tbody>';

// Chart
const base = 246;
const unit = 61;
let axis = '<path d="M42 64V246M53 59V241M286 59V241" fill="none" stroke="#999"/>';
for (let v = 0; v <= 3; v += 0.5) {
    const y = base - v * unit + 1;
    axis += `<path d="M40 ${y}h2l11 -5h233" fill="none" stroke="#999"/>`;
    axis += `<text class="axis-label" x="35" y="${y + 4}">${v}</text>`;
}
document.getElementById('axis').innerHTML = axis;

function bar(x, value, front, side, top) {
    const y = base - value * unit;
    return `<path d="M${x + 13} ${y + 1}l5 -3V${base - 3}l-5 3z" fill="${side}"/>
        <path d="M${x} ${y + 1}l5 -4q8 -2 13 0l-5 4z" fill="${top}"/>
        <path d="M${x} ${base}V${y + 1}q6 -3 13 0V${base}z" fill="${front}"/>`;
}

let bars = '';
for (let i = 0; i < 6; i++) {
    const x = 51 + i * 39;
    bars += bar(x, cells['B' + (i + 2)], '#004586', '#002a52', '#00305e');
    bars += bar(x + 13, cells['C' + (i + 2)], '#ff420e', '#9c2808', '#b02e0a');
}
document.getElementById('bars').innerHTML = bars;
```
